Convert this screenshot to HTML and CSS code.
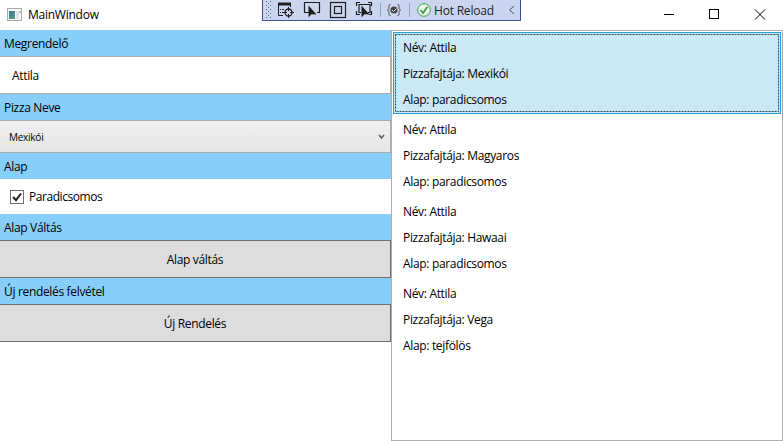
FILE: index.html
```html
<!DOCTYPE html>
<html lang="hu">
<head>
<meta charset="utf-8">
<title>MainWindow</title>
<link rel="stylesheet" href="styles.css">
</head>
<body>
<div class="window">
  <header class="titlebar">
    <svg class="app-icon" width="16" height="14" viewBox="0 0 16 14">
      <defs><linearGradient id="g" x1="0" y1="0" x2="1" y2="1"><stop offset="0" stop-color="#3c6fb0"/><stop offset="1" stop-color="#55a46c"/></linearGradient></defs>
      <rect x=".5" y=".5" width="14" height="12" fill="#fafafa" stroke="#a5a9ad"/>
      <rect x="2" y="3" width="6" height="8" fill="url(#g)"/>
      <rect x="9" y="3" width="3" height="8" fill="#e3e4e5"/>
      <rect x="12.500" y="3" width="1" height="2" fill="#5aa08c"/>
    </svg>
    <span class="title">MainWindow</span>
    <div class="controls">
      <svg width="135" height="29" viewBox="0 0 135 29" fill="none" stroke="#000">
        <path d="M16 14.500h10"/>
        <rect x="61.500" y="9.500" width="9" height="9"/>
        <path d="M107 9.500l10 10M117 9.500l-10 10"/>
      </svg>
    </div>
  </header>

  <div class="debugbar">
    <svg class="tools" width="151" height="20" viewBox="0 0 151 20" fill="none" stroke="#1e1e1e">
      <g stroke="#52618f" stroke-dasharray="1 3">
        <path d="M3.500 1v18M7.500 1v18"/><path d="M5.500 3v16"/>
      </g>
      <path d="M20 15.500h-4.500v-12h12V7M19 9.500h2M19 12.500h1"/><path d="M15 4h13" stroke-width="3"/><path d="M17 9.500h1M17 12.500h1"/>
      <circle cx="25.500" cy="12.500" r="3.500" stroke-width="1.300"/><path d="M25.500 7v4M25.500 14v4M20 12.500h4M27 12.500h4"/>
      <path d="M46 12.500h-4.500v-10h15v10H54" stroke-width="1.200"/>
      <path d="M45.500 5.500v12l3-3.200 5 .2z" fill="#1e1e1e" stroke="none"/>
      <rect x="67.500" y="2.500" width="15" height="15" stroke-width="1.200"/><rect x="71.500" y="6.500" width="7" height="7" stroke-width="1.200"/>
      <path d="M93.500 6V2.500H97M105 2.500h3.500V6M108.500 11v3.500H106M93.500 11v3.500H97M98 12.500h-2v-8h11v8h-2" stroke-width="1.200"/>
      <path d="M98.500 5.500v12l3-3.200 5 .2z" fill="#1e1e1e" stroke="none"/>
      <path d="M117.500 3v14" stroke="#92a3ce"/>
      <path d="M127.500 4.500c-2 0-1.500 1.500-1.500 3s-.5 2-1.500 2.500c1 .5 1.500 1 1.500 2.500s-.5 3 1.500 3M134.500 4.500c2 0 1.500 1.500 1.500 3s.5 2 1.500 2.500c-1 .5-1.500 1-1.500 2.500s.5 3-1.500 3" stroke="#444"/>
      <circle cx="131" cy="10" r="3.500" fill="#444" stroke="none"/><path d="M129 10l1.500 1.500 3-3" stroke="#e5e9f6"/>
      <path d="M146.500 3v14" stroke="#92a3ce"/>
    </svg>
    <svg class="ok" width="14" height="14" viewBox="0 0 14 14" fill="none" stroke="#399b43">
      <circle cx="7" cy="7" r="6.300" fill="#edf6ee"/><path d="M3.500 7l2.500 3 4.500-6.300" stroke-width="1.700"/>
    </svg>
    <span class="hot">Hot Reload</span>
    <svg class="collapse" width="7" height="10" viewBox="0 0 7 10" fill="none" stroke="#3d4c83"><path d="M6 1L1.500 5 6 9"/></svg>
  </div>

  <main class="content">
    <section class="form">
      <div class="label">Megrendelő</div>
      <div class="textbox">Attila</div>
      <div class="label">Pizza Neve</div>
      <div class="combo"><span>Mexikói</span>
        <svg width="7" height="6" viewBox="0 0 7 6" fill="none" stroke="#606060" stroke-width="1.500"><path d="M1 1l2.500 3L6 1"/></svg>
      </div>
      <div class="label">Alap</div>
      <div class="check">
        <svg width="14" height="14" viewBox="0 0 14 14" fill="#fff" stroke="#707070"><rect x=".5" y=".5" width="13" height="13"/><path d="M3 7l3 3.200L11 3.500" fill="none" stroke="#212121" stroke-width="2"/></svg>
        <span>Paradicsomos</span>
      </div>
      <div class="label">Alap Váltás</div>
      <div class="button">Alap váltás</div>
      <div class="label">Új rendelés felvétel</div>
      <div class="button">Új Rendelés</div>
    </section>
    <section class="list">
      <div class="item selected">
        <svg class="focus" width="384" height="78" fill="none"><rect x=".5" y=".5" width="383" height="77"/></svg>
        <p>Név: Attila</p><p>Pizzafajtája: Mexikói</p><p>Alap: paradicsomos</p></div>
      <div class="item"><p>Név: Attila</p><p>Pizzafajtája: Magyaros</p><p>Alap: paradicsomos</p></div>
      <div class="item"><p>Név: Attila</p><p>Pizzafajtája: Hawaai</p><p>Alap: paradicsomos</p></div>
      <div class="item"><p>Név: Attila</p><p>Pizzafajtája: Vega</p><p>Alap: tejfölös</p></div>
    </section>
  </main>
</div>
</body>
</html>
```
FILE: styles.css
```css
* { box-sizing: border-box; }
body { margin: 0; background: #fff; color: #000; font: 12px/16px "Open Sans", "Noto Sans", sans-serif; letter-spacing: -0.33px; }
svg { display: block; flex: none; }
.window { position: relative; width: 783px; height: 441px; overflow: hidden; }
.titlebar { height: 30px; display: flex; align-items: center; padding-left: 7px; }
.title { margin-left: 5px; letter-spacing: -0.25px; }
.controls { margin-left: auto; align-self: flex-start; width: 135px; }
.debugbar { position: absolute; left: 262px; top: 0; width: 259px; height: 21px; display: flex; align-items: center; background: #ccd5f0; border: 1px solid #40508d; border-top: 0; }
.ok { margin-left: 3px; }
.hot { margin-left: 3px; padding-top: 1px; color: #1e1e1e; letter-spacing: -0.2px; }
.collapse { margin-left: auto; margin-right: 5px; }
.content { display: flex; height: 411px; }
.form { width: 391px; }
.label { height: 26px; padding-left: 4px; line-height: 27px; background: #87cefa; }
.textbox { height: 38px; border: 1px solid #abadb3; border-left: 0; padding-left: 12px; line-height: 37px; }
.combo { height: 33px; display: flex; align-items: center; justify-content: space-between; padding: 0 5px 0 9px; border: 1px solid #acacac; border-left: 0; background: linear-gradient(#f0f0f0, #e5e5e5); font-size: 10px; letter-spacing: -0.25px; }
.combo span { padding-top: 1px; }
.check { height: 35px; display: flex; align-items: center; padding-left: 10px; gap: 5px; letter-spacing: -0.45px; }
.button { height: 38px; border: 1px solid #707070; border-left: 0; background: #ddd; text-align: center; line-height: 38px; }
.list { width: 392px; border: 1px solid #abadb3; padding: 1px; }
.item { position: relative; width: 388px; height: 82px; border: 1px solid transparent; padding: 1px 9px; }
.item p { margin: 0; height: 26px; line-height: 28px; }
.selected { background: #cbe8f6; border-color: #26a0da; }
.focus { position: absolute; left: 1px; top: 1px; }
.focus rect { stroke: #34444c; stroke-dasharray: 2 1; }
```
